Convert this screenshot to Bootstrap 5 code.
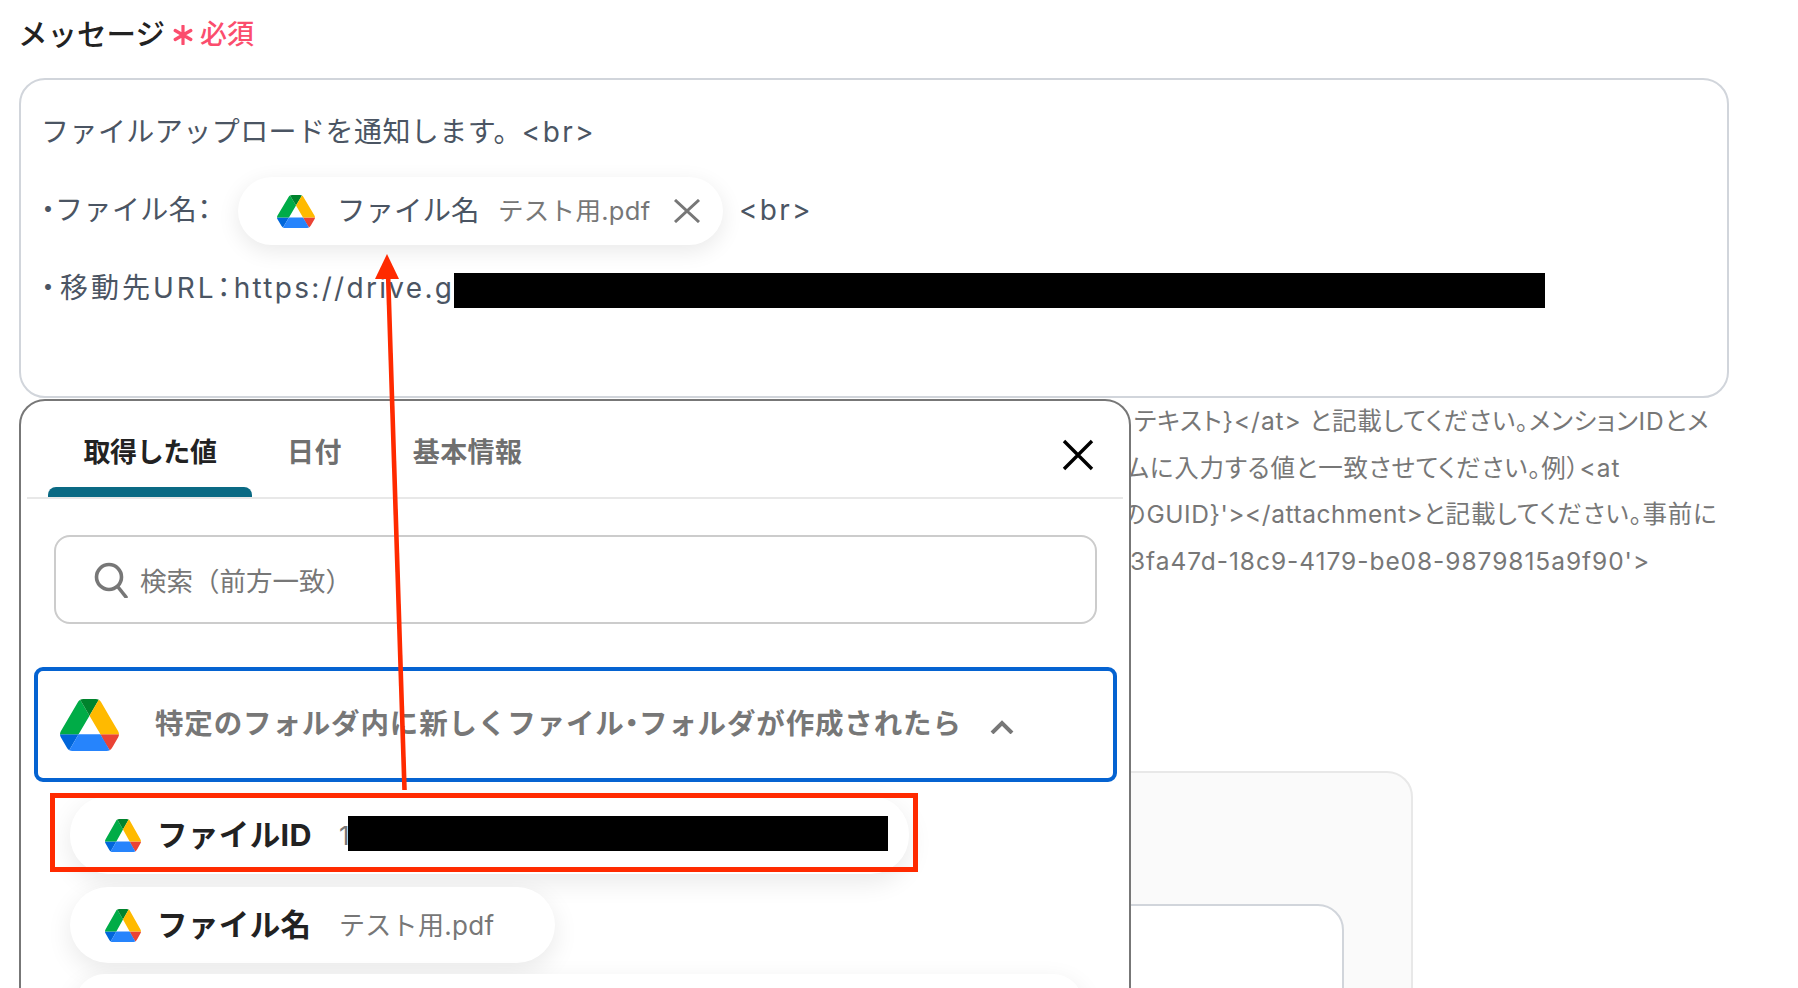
<!DOCTYPE html>
<html lang="ja">
<head>
<meta charset="utf-8">
<title>メッセージ</title>
<link href="https://cdn.jsdelivr.net/npm/bootstrap@5.3.0/dist/css/bootstrap.min.css" rel="stylesheet">
<style>
html,body{height:988px;overflow:hidden;background:#fff}
body{font-family:Inter,"Noto Sans CJK JP",sans-serif;color:#4b5563}
.stage{position:relative;width:1798px;height:988px;overflow:hidden;padding:0 19px}
.field-label{display:flex;align-items:center;height:78px;padding:0 0 11px 0;margin:0 0 0 -1px;gap:8px;font-size:29.5px;font-weight:500;color:#222;line-height:40px}
.req{color:#fb4d6d;font-size:27px;font-weight:500;display:flex;align-items:center;gap:7px;padding-top:2px}
.msg-box{width:1710px;height:320px;border:2px solid #d1d5db;border-radius:26px;padding:13px 20px;font-size:28px;letter-spacing:.45px;background:#fff}
.msg-line{height:78px;display:flex;align-items:center;white-space:nowrap}
.lat{letter-spacing:2.3px}
.narrow{font-feature-settings:"palt" 1;letter-spacing:0}
.prefix{display:inline-block;width:197px;flex:none}
.url-head{letter-spacing:3px;margin-left:5px}
.url-colon{margin-right:3px}
.chip{height:68px;width:485px;border-radius:34px;background:#fff;box-shadow:0 6px 22px rgba(0,0,0,.09);margin:2px 16px 0 0;padding-left:39px;flex:none;display:flex;align-items:center}
.chip-ico{width:38px;height:33px;flex:none}
.chip-name{margin-left:22px;color:#4b5563;font-size:28.5px;width:161px;letter-spacing:0}
.chip-val{color:#777;font-size:25.5px;letter-spacing:.3px;width:175px}
.redact{display:inline-block;background:#000;flex:none}
.redact-url{width:1091px;height:35px;margin-top:4px}
.redact-id{width:540px;height:35px;margin:0 0 4px -2px}
.helper{margin:0;font-size:24.5px;line-height:46.7px;color:#777;height:209px;letter-spacing:.8px;white-space:nowrap;font-feature-settings:"palt" 1}
.helper .lat{letter-spacing:.95px}
.helper .lat-tight{letter-spacing:.55px}
.help-a{padding-left:1115px}.help-b{padding-left:1107px}.help-c{padding-left:1103px}.help-d{padding-left:1111px}
.panel-back{margin:164px 0 0 0;width:1394px;height:300px;background:#fafafa;border:2px solid #e8e8e8;border-radius:26px;padding:131px 67px 0 0}
.panel-inner{height:200px;background:#fff;border:2px solid #d1d5db;border-radius:26px}
.picker{position:absolute;left:19px;top:399px;width:1112px;height:640px;background:#fff;border:2px solid #777;border-radius:26px;padding:0 6px}
.tabbar{height:98px;border-bottom:2px solid #e8e8e8;position:relative;display:flex;align-items:flex-start;padding:32px 0 0 21px}
.tab-item{font-size:27px;font-weight:700;line-height:40px;padding:0 26px;margin-right:19px;color:#6f6f6f;white-space:nowrap;letter-spacing:.4px}
.tab-on{color:#222;width:204px;padding:0;text-align:center;margin-right:9px;position:relative;height:64px;letter-spacing:-.4px}
.tab-on::after{content:"";position:absolute;left:0;right:0;bottom:0;height:10px;background:#0a6a84;border-radius:8px 8px 0 0}
.close-x{position:absolute;right:29px;top:38px;width:32px;height:32px}
.search-row{margin:36px 26px 0 27px;height:89px;border:2px solid #ccc;border-radius:16px;display:flex;align-items:center;padding-left:38px;gap:12px}
.search-row span{font-size:26.5px;color:#777;padding-top:4px}
.group-head{margin:43px 0 0 7px;width:1083px;height:115px;border:4px solid #0563d1;border-radius:9px;display:flex;align-items:center;padding-left:22px}
.group-ico{width:59px;height:52px;flex:none}
.group-title{margin-left:36px;font-size:28.5px;font-weight:700;color:#777;letter-spacing:.85px;white-space:nowrap}
.chev{margin-left:28px;margin-top:4px}
.val-pill{margin-left:43px;background:#fff;border-radius:38px;box-shadow:0 8px 26px rgba(0,0,0,.09);height:76px;display:flex;align-items:center;padding-left:35px}
.p1{width:839px;margin-top:14px;height:78px}
.p2{width:485px;margin-top:13px}
.p3{width:1008px;margin-top:11px;margin-left:48px;height:60px}
.val-ico{width:36px;height:33px;flex:none}
.val-name{margin-left:16px;font-size:30.5px;font-weight:700;color:#222;width:182px;white-space:nowrap;letter-spacing:.4px}
.val-text{font-size:26px;color:#777;letter-spacing:.3px;white-space:nowrap}
.overlay{position:absolute;left:0;top:0;width:1798px;height:988px;pointer-events:none}
</style>
</head>
<body>
<svg width="0" height="0" class="position-absolute">
<symbol id="gdrive" viewBox="0 0 87.3 78" preserveAspectRatio="none">
<path d="m6.6 66.85 3.85 6.65c.8 1.4 1.95 2.5 3.3 3.3l13.75-23.8h-27.5c0 1.55.4 3.1 1.2 4.5z" fill="#0066da"/>
<path d="m43.65 25-13.75-23.8c-1.35.8-2.5 1.9-3.3 3.3l-25.4 44a9.06 9.06 0 0 0 -1.2 4.5h27.5z" fill="#00ac47"/>
<path d="m73.55 76.8c1.35-.8 2.5-1.9 3.3-3.3l1.6-2.75 7.65-13.25c.8-1.4 1.2-2.95 1.2-4.5h-27.502l5.852 11.5z" fill="#ea4335"/>
<path d="m43.65 25 13.75-23.8c-1.35-.8-2.9-1.2-4.5-1.2h-18.5c-1.6 0-3.15.45-4.5 1.2z" fill="#00832d"/>
<path d="m59.8 53h-32.3l-13.75 23.8c1.35.8 2.9 1.2 4.5 1.2h50.8c1.6 0 3.15-.45 4.5-1.2z" fill="#2684fc"/>
<path d="m73.4 26.5-12.7-22c-.8-1.4-1.95-2.5-3.3-3.3l-13.75 23.8 16.15 28h27.45c0-1.55-.4-3.1-1.2-4.5z" fill="#ffba00"/>
</symbol>
</svg>
<div class="stage">
  <label class="field-label">メッセージ
    <span class="req"><svg width="20" height="20" viewBox="0 0 20 20" fill="none" stroke="#fb4d6d" stroke-width="3.2" stroke-linecap="round"><path d="M10 1v18M2.200 5.500l15.600 9M17.800 5.500l-15.600 9"/></svg>必須</span>
  </label>
  <div class="msg-box">
    <div class="msg-line">ファイルアップロードを通知します。<span class="lat">&lt;br&gt;</span></div>
    <div class="msg-line"><span class="prefix"><span class="narrow">・</span>ファイル名<span class="narrow">：</span></span><span class="chip"><svg class="chip-ico"><use href="#gdrive"/></svg><span class="chip-name">ファイル名</span><span class="chip-val">テスト用.pdf</span><svg width="28" height="24" viewBox="0 0 28 24" fill="none" stroke="#777" stroke-width="3"><path d="M2 1l24 22M26 1L2 23"/></svg></span><span class="lat">&lt;br&gt;</span></div>
    <div class="msg-line"><span class="narrow">・</span><span class="url-head">移動先URL</span><span class="narrow url-colon">：</span><span class="lat">https://drive.g</span><span class="redact redact-url"></span></div>
  </div>
  <div class="helper">
    <div class="help-a">テキスト<span class="lat">}&lt;/at&gt; </span>と記載してください。メンション<span class="lat">ID</span>とメ</div>
    <div class="help-b">ムに入力する値と一致させてください。例）<span class="lat">&lt;at</span></div>
    <div class="help-c">の<span class="lat-tight">GUID}'&gt;&lt;/attachment&gt;</span>と記載してください。事前に</div>
    <div class="help-d lat">3fa47d-18c9-4179-be08-9879815a9f90'&gt;</div>
  </div>
  <div class="panel-back"><div class="panel-inner"></div></div>

  <div class="picker">
    <div class="tabbar">
      <div class="tab-item tab-on">取得した値</div>
      <div class="tab-item">日付</div>
      <div class="tab-item">基本情報</div>
      <svg class="close-x" viewBox="0 0 32 32" fill="none" stroke="#000" stroke-width="3.4"><path d="M2 2l28 28M30 2L2 30"/></svg>
    </div>
    <div class="search-row">
      <svg width="34" height="36" viewBox="0 0 34 36" fill="none" stroke="#777" stroke-width="3.6"><circle cx="15" cy="15" r="12.5"/><path d="M24 25l8 10" stroke-linecap="round"/></svg>
      <span>検索（前方一致）</span>
    </div>
    <div class="group-head">
      <svg class="group-ico"><use href="#gdrive"/></svg>
      <span class="group-title">特定のフォルダ内に新しくファイル<span class="narrow">・</span>フォルダが作成されたら</span>
      <svg class="chev" width="24" height="14" viewBox="0 0 24 14" fill="none" stroke="#777" stroke-width="4"><path d="M2 13L12 3l10 10"/></svg>
    </div>
    <div class="val-pill p1"><svg class="val-ico"><use href="#gdrive"/></svg><span class="val-name">ファイルID</span><span class="val-text">1</span><span class="redact redact-id"></span></div>
    <div class="val-pill p2"><svg class="val-ico"><use href="#gdrive"/></svg><span class="val-name">ファイル名</span><span class="val-text">テスト用.pdf</span></div>
    <div class="val-pill p3"></div>
  </div>

  <svg class="overlay" viewBox="0 0 1798 988">
    <rect x="52.500" y="795.500" width="863" height="74" fill="none" stroke="#ff2a00" stroke-width="5"/>
    <path d="M404.500 790L388 272" stroke="#ff2a00" stroke-width="4.600" fill="none"/>
    <path d="M387 254L375 279H399Z" fill="#ff2a00"/>
  </svg>
</div>
<script src="https://cdn.jsdelivr.net/npm/bootstrap@5.3.0/dist/js/bootstrap.bundle.min.js"></script>
</body>
</html>
